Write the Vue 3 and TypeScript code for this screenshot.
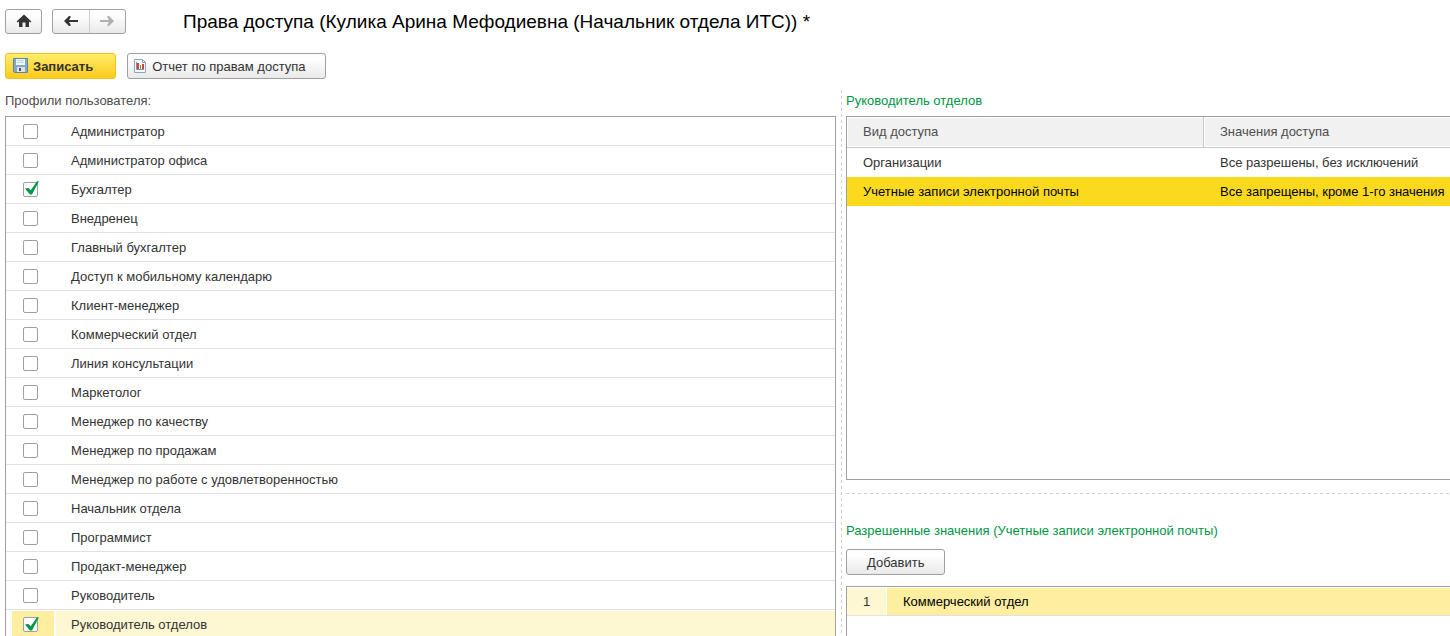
<script setup lang="ts">
import { ref } from 'vue'

interface Profile {
  name: string
  checked: boolean
}

const names: string[] = [
  'Администратор',
  'Администратор офиса',
  'Бухгалтер',
  'Внедренец',
  'Главный бухгалтер',
  'Доступ к мобильному календарю',
  'Клиент-менеджер',
  'Коммерческий отдел',
  'Линия консультации',
  'Маркетолог',
  'Менеджер по качеству',
  'Менеджер по продажам',
  'Менеджер по работе с удовлетворенностью',
  'Начальник отдела',
  'Программист',
  'Продакт-менеджер',
  'Руководитель',
  'Руководитель отделов',
]
const active = ref('Руководитель отделов')
const profiles = ref<Profile[]>(
  names.map((name) => ({ name, checked: name === 'Бухгалтер' || name === 'Руководитель отделов' })),
)

const accessKinds = [
  { kind: 'Организации', values: 'Все разрешены, без исключений' },
  { kind: 'Учетные записи электронной почты', values: 'Все запрещены, кроме 1-го значения' },
]
const activeKind = ref(1)
const allowed = ['Коммерческий отдел']
</script>

<template>
  <div class="page">
    <header class="topbar">
      <button class="btn home" type="button" aria-label="Домой">
        <svg width="16" height="14" viewBox="0 0 16 14">
          <path d="M8 0.5 0.6 7.5 1.6 8.6 3 7.6V13H6.5V8.5H9.5V13H13V7.6L14.4 8.6 15.4 7.5Z" fill="#333" />
        </svg>
      </button>
      <div class="nav">
        <button type="button" aria-label="Назад">
          <svg width="14" height="12" viewBox="0 0 14 12">
            <path d="M0 6 5 1H6.5V2.5L5 5H14V7H5L6.5 9.5V11H5Z" fill="#333" />
          </svg>
        </button>
        <button type="button" aria-label="Вперед" disabled>
          <svg width="14" height="12" viewBox="0 0 14 12">
            <path d="M14 6 9 1H7.5V2.5L9 5H0V7H9L7.5 9.5V11H9Z" fill="#b0b0b0" />
          </svg>
        </button>
      </div>
      <h1>Права доступа (Кулика Арина Мефодиевна (Начальник отдела ИТС)) *</h1>
    </header>

    <div class="commands">
      <button class="btn save" type="button">
        <svg width="15" height="16" viewBox="0 0 15 16">
          <path d="M0.5 0.5H14.5V14.5H1.5L0.5 13.5Z" fill="#85a9c4" stroke="#5e86a3" />
          <path d="M3 1H12V7H3Z" fill="#f0fafd" />
          <path d="M4 2.5H11M4 4.5H11" stroke="#b5d9e6" />
          <path d="M4 9H12V14H4Z" fill="#dfe3e6" />
          <path d="M6 10H8V13H6Z" fill="#3f5668" />
        </svg>
        <span>Записать</span>
      </button>
      <button class="btn report" type="button">
        <svg width="14" height="16" viewBox="0 0 14 16">
          <path d="M1.5 1.5H9.5L12.5 4.5V14.5H1.5Z" fill="#f3f9fd" stroke="#8ba5b8" />
          <path d="M9.5 1.5V4.5H12.5" fill="none" stroke="#8ba5b8" />
          <path d="M3.5 4V11.5H11" fill="none" stroke="#7b98ad" />
          <path d="M4 5H6V11H4Z" fill="#e33b2e" />
          <path d="M7 7H8V11H7Z" fill="#3aa757" />
          <path d="M9 6H11V11H9Z" fill="#e33b2e" />
        </svg>
        <span>Отчет по правам доступа</span>
      </button>
    </div>

    <main class="columns">
      <section class="profiles">
        <h2 class="caption">Профили пользователя:</h2>
        <ul class="box list">
          <li v-for="(p, i) in profiles" :key="p.name" :class="{ active: p.name === active }" @click="active = p.name">
            <span class="mark">
              <input :id="`profile-${i}`" v-model="p.checked" type="checkbox" />
              <svg v-if="p.checked" class="tick" width="16" height="16" viewBox="0 0 16 16">
                <path d="M2 8.5 5.5 8 7.8 10.3 13.8 1.5 16 1 9 14.5H7Z" fill="#009646" />
              </svg>
            </span>
            <label :for="`profile-${i}`">{{ p.name }}</label>
          </li>
        </ul>
      </section>

      <div class="splitter"></div>

      <section class="details">
        <h2 class="caption green">Руководитель отделов</h2>
        <div class="box kinds">
          <table>
            <thead>
              <tr>
                <th scope="col">Вид доступа</th>
                <th scope="col">Значения доступа</th>
              </tr>
            </thead>
            <tbody>
              <tr v-for="(a, i) in accessKinds" :key="a.kind" :class="{ active: i === activeKind }" @click="activeKind = i">
                <td>{{ a.kind }}</td>
                <td>{{ a.values }}</td>
              </tr>
            </tbody>
          </table>
        </div>
        <div class="divider"></div>
        <h2 class="caption green">Разрешенные значения (Учетные записи электронной почты)</h2>
        <button class="btn add" type="button"><span>Добавить</span></button>
        <ol class="box allowed">
          <li v-for="(v, i) in allowed" :key="v">
            <span class="num">{{ i + 1 }}</span>
            <span class="value">{{ v }}</span>
          </li>
        </ol>
      </section>
    </main>
  </div>
</template>

<style>
body {
  margin: 0;
  background: #fff;
}
</style>

<style scoped>
.page {
  box-sizing: border-box;
  display: flex;
  flex-direction: column;
  height: 100vh;
  padding: 8px 0 0 5px;
  overflow: hidden;
  color: #333;
  font: 13px/16px 'Liberation Sans', Arial, sans-serif;
}
h1,
h2,
ul,
ol {
  margin: 0;
  padding: 0;
  font-weight: normal;
  list-style: none;
}
button {
  font: inherit;
  color: inherit;
  padding: 0;
}
svg {
  flex: none;
}
.topbar {
  display: flex;
  align-items: center;
  height: 26px;
  flex: none;
}
.btn,
.nav {
  box-sizing: border-box;
  display: flex;
  align-items: center;
  border: 1px solid #a0a0a0;
  border-radius: 3px;
  background: linear-gradient(#fff 20%, #e9e9e9);
}
.btn span {
  padding-top: 2px;
}
.home {
  justify-content: center;
  width: 37px;
  height: 25px;
}
.nav {
  width: 74px;
  height: 25px;
  margin-left: 10px;
}
.nav button {
  display: flex;
  flex: 1;
  align-items: center;
  justify-content: center;
  height: 23px;
  border: 0;
  background: none;
}
.nav button + button {
  border-left: 1px solid #cfcfcf;
}
h1 {
  margin-left: 57px;
  padding-top: 2px;
  color: #000;
  font-size: 19px;
  line-height: 24px;
  white-space: nowrap;
}
.commands {
  display: flex;
  flex: none;
  gap: 11px;
  margin-top: 19px;
}
.commands .btn {
  height: 26px;
  padding: 0 22px 0 7px;
}
.commands .save {
  gap: 5px;
  border-color: #f3c21c;
  background: linear-gradient(#ffec6a, #fccb1c);
  font-weight: bold;
}
.commands .report {
  gap: 5px;
  padding: 0 19px 0 5px;
}
.columns {
  display: grid;
  grid-template-columns: minmax(0, 831fr) 10px minmax(0, 604fr);
  flex: 1;
  min-height: 0;
  margin-top: 11px;
}
.caption {
  flex: none;
  height: 24px;
  padding-top: 1px;
  box-sizing: border-box;
  color: #4d4d4d;
  font-size: 13px;
  line-height: 16px;
  white-space: nowrap;
}
.caption.green {
  color: #009646;
}
.box {
  box-sizing: border-box;
  border: 1px solid #a0a0a0;
}
.profiles,
.details {
  display: flex;
  flex-direction: column;
  min-width: 0;
}
.columns > * {
  padding-top: 2px;
}
.list {
  border-bottom: 0;
}
.list li {
  display: flex;
  align-items: center;
  box-sizing: border-box;
  height: 29px;
  border-bottom: 1px solid #e2e2e2;
}
.mark {
  position: relative;
  display: flex;
  align-items: center;
  align-self: stretch;
  box-sizing: border-box;
  width: 42px;
  margin-left: 6px;
  padding-left: 11px;
}
.mark input {
  appearance: none;
  width: 15px;
  height: 15px;
  margin: 0;
  border: 1px solid #a0a0a0;
  border-radius: 2px;
  background: #fff;
}
.tick {
  position: absolute;
  left: 11px;
  top: 5px;
  pointer-events: none;
}
.list label {
  display: flex;
  align-items: center;
  align-self: stretch;
  flex: 1;
  margin-left: 2px;
  padding: 2px 0 0 15px;
}
.list .active {
  padding-top: 1px;
}
.list .active .mark {
  background: #fdeea0;
}
.list .active label {
  padding-top: 0;
  background: #fdf7d2;
}
.splitter {
  background: repeating-linear-gradient(#d0d0d0 0 3px, transparent 3px 6px) 5px 0 / 1px 100% no-repeat;
}
.kinds {
  flex: none;
  min-height: 364px;
  border-right: 0;
}
table {
  width: 100%;
  table-layout: fixed;
  border-spacing: 0;
}
th,
td {
  box-sizing: border-box;
  height: 29px;
  padding: 0 0 0 16px;
  text-align: left;
  font-weight: normal;
  white-space: nowrap;
}
th {
  height: 31px;
  border-bottom: 1px solid #c8c8c8;
  background: #f1f1f1;
  color: #4d4d4d;
  box-shadow: inset 1px 1px #fff, inset 0 -1px #fff;
}
th:first-child {
  width: 59.2%;
  border-right: 1px solid #c8c8c8;
}
tbody .active td {
  background: #fbda1e;
  color: #000;
}
.divider {
  flex: none;
  height: 1px;
  margin: 13px 0 28px;
  background: repeating-linear-gradient(90deg, #d0d0d0 0 3px, transparent 3px 6px);
}
.add {
  align-self: flex-start;
  flex: none;
  height: 26px;
  margin: 3px 0 11px;
  padding: 0 20px;
}
.allowed {
  flex: 1;
  border-right: 0;
  border-bottom: 0;
}
.allowed li {
  display: flex;
  box-sizing: border-box;
  height: 29px;
  padding-top: 1px;
  border-bottom: 1px solid #e2e2e2;
  line-height: 27px;
}
.num {
  width: 39px;
  margin-right: 1px;
  background: #fdf7d2;
  text-align: center;
}
.value {
  flex: 1;
  padding-left: 16px;
  background: #fdeea0;
  color: #000;
}
</style>
